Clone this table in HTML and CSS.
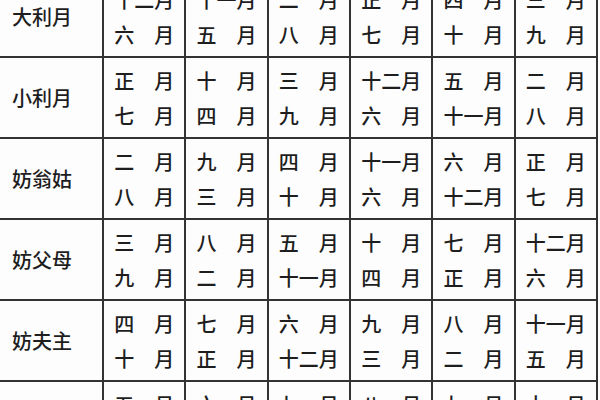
FILE: index.html
```html
<!DOCTYPE html>
<html lang="zh">
<head>
<meta charset="utf-8">
<title>嫁娶月份表</title>
<link rel="stylesheet" href="styles.css">
</head>
<body>
<div class="table">
  <div class="label">大利月</div>
  <div class="cell"><span>十二月</span><span>六　月</span></div>
  <div class="cell"><span>十一月</span><span>五　月</span></div>
  <div class="cell"><span>二　月</span><span>八　月</span></div>
  <div class="cell"><span>正　月</span><span>七　月</span></div>
  <div class="cell"><span>四　月</span><span>十　月</span></div>
  <div class="cell"><span>三　月</span><span>九　月</span></div>

  <div class="label">小利月</div>
  <div class="cell"><span>正　月</span><span>七　月</span></div>
  <div class="cell"><span>十　月</span><span>四　月</span></div>
  <div class="cell"><span>三　月</span><span>九　月</span></div>
  <div class="cell"><span>十二月</span><span>六　月</span></div>
  <div class="cell"><span>五　月</span><span>十一月</span></div>
  <div class="cell"><span>二　月</span><span>八　月</span></div>

  <div class="label">妨翁姑</div>
  <div class="cell"><span>二　月</span><span>八　月</span></div>
  <div class="cell"><span>九　月</span><span>三　月</span></div>
  <div class="cell"><span>四　月</span><span>十　月</span></div>
  <div class="cell"><span>十一月</span><span>六　月</span></div>
  <div class="cell"><span>六　月</span><span>十二月</span></div>
  <div class="cell"><span>正　月</span><span>七　月</span></div>

  <div class="label">妨父母</div>
  <div class="cell"><span>三　月</span><span>九　月</span></div>
  <div class="cell"><span>八　月</span><span>二　月</span></div>
  <div class="cell"><span>五　月</span><span>十一月</span></div>
  <div class="cell"><span>十　月</span><span>四　月</span></div>
  <div class="cell"><span>七　月</span><span>正　月</span></div>
  <div class="cell"><span>十二月</span><span>六　月</span></div>

  <div class="label">妨夫主</div>
  <div class="cell"><span>四　月</span><span>十　月</span></div>
  <div class="cell"><span>七　月</span><span>正　月</span></div>
  <div class="cell"><span>六　月</span><span>十二月</span></div>
  <div class="cell"><span>九　月</span><span>三　月</span></div>
  <div class="cell"><span>八　月</span><span>二　月</span></div>
  <div class="cell"><span>十一月</span><span>五　月</span></div>

  <div class="label">妨女身</div>
  <div class="cell"><span>五　月</span><span>十一月</span></div>
  <div class="cell"><span>六　月</span><span>十二月</span></div>
  <div class="cell"><span>七　月</span><span>正　月</span></div>
  <div class="cell"><span>八　月</span><span>二　月</span></div>
  <div class="cell"><span>九　月</span><span>三　月</span></div>
  <div class="cell"><span>十　月</span><span>四　月</span></div>
</div>
</body>
</html>
```
FILE: styles.css
```css
html, body {
  margin: 0;
  padding: 0;
  background: #ffffff;
  overflow: hidden;
}

body {
  width: 600px;
  height: 400px;
  font-family: "Noto Sans CJK SC", "Noto Sans CJK JP", sans-serif;
  color: #1e1e1e;
}

.table {
  width: 596px;
  margin-top: -23px;
  padding-right: 2px;
  display: grid;
  grid-template-columns: 102px repeat(6, 1fr);
  grid-auto-rows: 79px;
  gap: 2px;
  background: #333333;
}

.label {
  background: #fdfdfd;
  display: flex;
  align-items: center;
  padding-left: 12px;
  font-size: 20px;
  font-weight: 500;
  line-height: 1;
}

.cell {
  background: #fdfdfd;
  display: flex;
  flex-direction: column;
  align-items: center;
  justify-content: center;
  font-size: 20px;
  font-weight: 500;
  line-height: 35px;
}

.cell span {
  display: block;
  white-space: nowrap;
}
```
